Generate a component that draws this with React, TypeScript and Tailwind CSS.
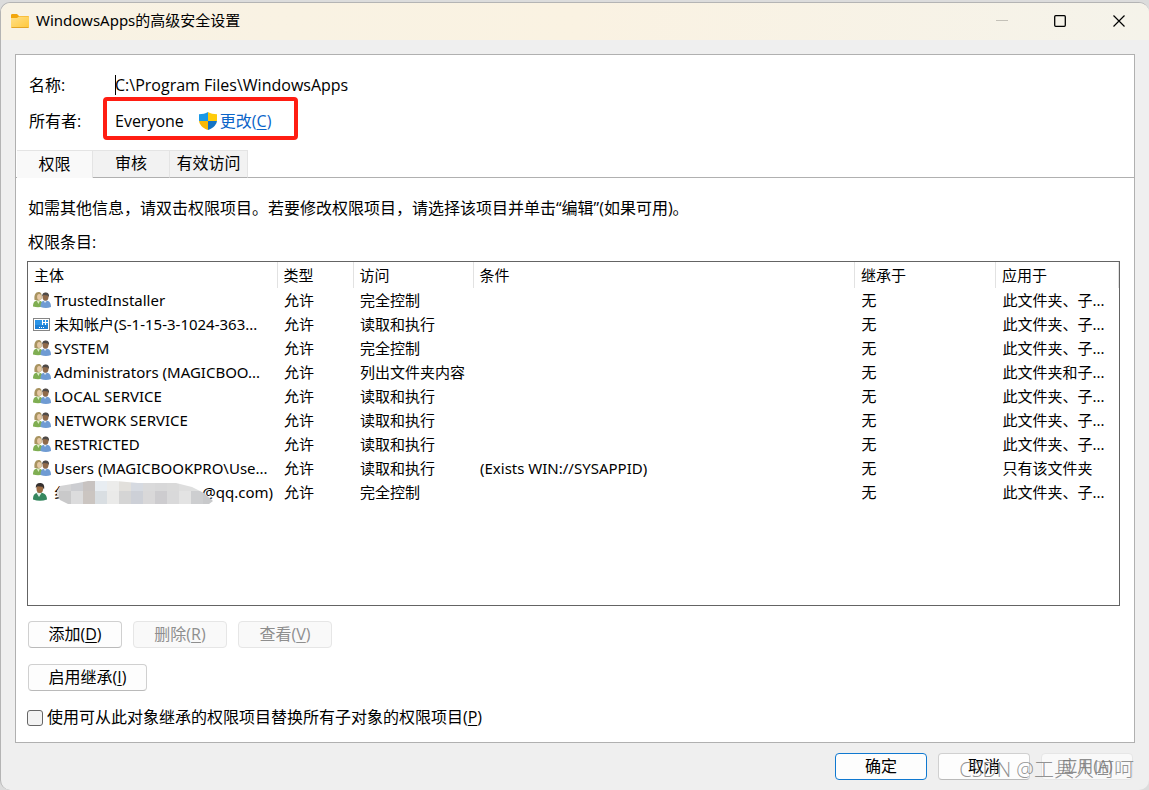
import React, { useState } from 'react';

type IconKind = 'group' | 'package' | 'user';

interface Entry {
  icon: IconKind;
  principal: string;
  access: string;
  condition?: string;
  appliesTo: string;
  redacted?: boolean;
}

const ENTRIES: Entry[] = [
  { icon: 'group', principal: 'TrustedInstaller', access: '完全控制', appliesTo: '此文件夹、子...' },
  { icon: 'package', principal: '未知帐户(S-1-15-3-1024-363...', access: '读取和执行', appliesTo: '此文件夹、子...' },
  { icon: 'group', principal: 'SYSTEM', access: '完全控制', appliesTo: '此文件夹、子...' },
  { icon: 'group', principal: 'Administrators (MAGICBOO...', access: '列出文件夹内容', appliesTo: '此文件夹和子...' },
  { icon: 'group', principal: 'LOCAL SERVICE', access: '读取和执行', appliesTo: '此文件夹、子...' },
  { icon: 'group', principal: 'NETWORK SERVICE', access: '读取和执行', appliesTo: '此文件夹、子...' },
  { icon: 'group', principal: 'RESTRICTED', access: '读取和执行', appliesTo: '此文件夹、子...' },
  {
    icon: 'group',
    principal: 'Users (MAGICBOOKPRO\\Use...',
    access: '读取和执行',
    condition: '(Exists WIN://SYSAPPID)',
    appliesTo: '只有该文件夹',
  },
  { icon: 'user', principal: '@qq.com)', access: '完全控制', appliesTo: '此文件夹、子...', redacted: true },
];

const FolderIcon = () => (
  <svg width="18" height="14" viewBox="0 0 18 14" aria-hidden="true">
    <defs>
      <linearGradient id="folder" x1="0" y1="0" x2="1" y2="1">
        <stop offset="0" stopColor="#ffe08a" />
        <stop offset="1" stopColor="#ffc83a" />
      </linearGradient>
    </defs>
    <path d="M0 1.2Q0 0 1.2 0H6l2 2h8.800q1.200 0 1.200 1.200V6H0Z" fill="#f2a60d" />
    <path d="M0 4h6l2-1.500h8.800q1.200 0 1.200 1.200v9.100q0 1.200-1.200 1.200H1.200Q0 14 0 12.800Z" fill="url(#folder)" />
    <path d="M.5 13.500h17" stroke="#e3a526" strokeWidth="1" />
  </svg>
);

const ShieldIcon = () => (
  <svg width="18" height="18" viewBox="0 0 18 18" aria-hidden="true">
    <defs>
      <clipPath id="shield">
        <path d="M9 0c2.500 1.700 5.500 2.200 9 2.200V8c0 4.500-3.500 8-9 10C3.500 16 0 12.500 0 8V2.200C3.500 2.200 6.500 1.700 9 0Z" />
      </clipPath>
    </defs>
    <g clipPath="url(#shield)">
      <path d="M0 0h9v9H0Z" fill="#1a98e6" />
      <path d="M9 0h9v9H9Z" fill="#ffcb0a" />
      <path d="M0 9h9v9H0Z" fill="#f9b806" />
      <path d="M9 9h9v9H9Z" fill="#1473c4" />
    </g>
  </svg>
);

const GroupIcon = () => (
  <svg width="18" height="16" viewBox="0 0 18 16" aria-hidden="true">
    <path d="M0 14.500c0-4 1.500-6 5-6s5 2 5 6Q5 16 0 14.500Z" fill="#7fae52" />
    <path d="M3.500 8.500 5.500 12l1.500-3.500Z" fill="#dcebc4" />
    <path d="M1.500 8C.8 3 2.500 0 5.500 0S9 2.500 8.500 7L6 8.500Z" fill="#a99460" />
    <ellipse cx="6.200" cy="5" rx="2.100" ry="3" fill="#e6c9a6" />
    <path d="M7.500 15c0-4.500 1.500-6.500 5-6.500s5.500 2 5.500 6.500q-5 1.800-10.500 0Z" fill="#6f9bd3" />
    <path d="M10.500 8.500 12 11l2-2.500Z" fill="#dce8f6" />
    <ellipse cx="12.500" cy="4.700" rx="3" ry="4" fill="#8f6a4a" />
    <path d="M9.200 4.500C9 1.800 10.300.5 12.700.5s3.800 1.500 3.200 4.700L14.800 3.500 10.500 3Z" fill="#4d4947" />
  </svg>
);

const PackageIcon = () => (
  <svg width="17" height="13" viewBox="0 0 17 13" shapeRendering="crispEdges" aria-hidden="true">
    <path d="M0 0h17v13H0Z" fill="#858585" />
    <path d="M1 1h15v11H1Z" fill="#fff" />
    <path d="M2 2h7v5H2ZM10 2h2v2h-2ZM13 2h2v2h-2ZM10 5h2v2h-2ZM13 5h2v2h-2Z" fill="#2a93e6" />
    <path d="M2 7h13v4H2Z" fill="#1c7fd4" />
    <path d="M6 9h1v1H6ZM8 9h1v1H8ZM10 9h1v1h-1Z" fill="#fff" />
  </svg>
);

const UserIcon = () => (
  <svg width="14" height="18" viewBox="0 0 14 18" aria-hidden="true">
    <path d="M0 16.500C0 11.500 2 9.500 6.500 9.500S14 12 14 16.500q-7 2.500-14 0Z" fill="#35875f" />
    <path d="m3.500 10 2.500 4 2.500-4Z" fill="#e3f1ea" />
    <ellipse cx="6.800" cy="5.500" rx="3.300" ry="4.500" fill="#9b6b43" />
    <path d="M2.800 5C2.500 1.700 4 0 7 0s5 2 4 6.500L9.500 3.800 4.500 3.200Z" fill="#35302f" />
  </svg>
);

const MOSAIC_TOP = ['#d3d3d4', '#cccdd1', '#c8c3c1', '#e8edf2', '#ececeb', '#e2e0dc', '#d6dae1', '#dadadb', '#d8d8d9', '#dadada', '#dedede', '#dedfdf', '#d6d6d8'];
const MOSAIC_BOTTOM = ['#c9c9ca', '#dcdcdd', '#cbc5c1', '#d9dee2', '#eaeae9', '#d5d5d5', '#cdd0d7', '#d9d8d9', '#cdcccf', '#d9d9da', '#e3e3e3', '#cdced0', '#c8c9cb'];

const Mosaic = () => (
  <svg className="absolute top-0 left-0" width="160" height="24" viewBox="0 0 160 24" aria-hidden="true">
    <defs>
      <clipPath id="smear">
        <path d="M2 13 6 6 24 3 34 1h28l22 2h38l16 4 12 6 9 8-4 3H14L6 20Z" />
      </clipPath>
    </defs>
    <g clipPath="url(#smear)">
      {MOSAIC_TOP.map((fill, i) => (
        <rect key={i} x={i * 12 + 5} y="0" width="12" height="11" fill={fill} />
      ))}
      {MOSAIC_BOTTOM.map((fill, i) => (
        <rect key={i} x={i * 12 + 5} y="11" width="12" height="13" fill={fill} />
      ))}
      <rect x="0" y="0" width="5" height="24" fill="#dcdcdc" />
    </g>
  </svg>
);

const EntryIcon: React.FC<{ kind: IconKind }> = ({ kind }) => {
  if (kind === 'package') return <PackageIcon />;
  if (kind === 'user') return <UserIcon />;
  return <GroupIcon />;
};

const AccessKey: React.FC<{ letter: string }> = ({ letter }) => (
  <>
    (<span className="underline underline-offset-2">{letter}</span>)
  </>
);

const BUTTON =
  'h-[27px] rounded border border-[#d0d0d0] border-b-[#bababa] bg-[#fdfdfd] pb-[2px] text-base leading-5 disabled:border-[#e6e6e6] disabled:bg-[#f9f9f9] disabled:text-[#8e8e8e]';

const TABS = [
  { label: '权限', width: 'w-[76px]' },
  { label: '审核', width: 'w-[77px]' },
  { label: '有效访问', width: 'w-[78px]' },
];

const TitleBar = () => (
  <header className="flex h-[37px] items-center bg-linear-to-r from-[#f8f2e4] via-[#faf2e2] to-[#f5f3ea] pb-[2px] pl-[10px]">
    <FolderIcon />
    <h1 className="ml-[7px] flex-1 pb-[2px] font-['Noto_Sans','Noto_Sans_CJK_SC',sans-serif] text-[15px] leading-5">
      WindowsApps的高级安全设置
    </h1>
    <button type="button" disabled aria-label="最小化" className="flex h-full w-[58px] items-center justify-center">
      <svg width="12" height="12" viewBox="0 0 12 12">
        <path d="M0 5.500h12" stroke="#c4c1b8" />
      </svg>
    </button>
    <button type="button" aria-label="最大化" className="flex h-full w-[58px] items-center justify-center">
      <svg width="12" height="12" viewBox="0 0 12 12">
        <rect x=".7" y=".7" width="10.600" height="10.600" rx="1" fill="none" stroke="#000" strokeWidth="1.300" />
      </svg>
    </button>
    <button type="button" aria-label="关闭" className="flex h-full w-[60px] items-center justify-center">
      <svg width="12" height="12" viewBox="0 0 12 12">
        <path d="m.5.5 11 11M11.500.5l-11 11" stroke="#000" strokeWidth="1.200" />
      </svg>
    </button>
  </header>
);

const EntryTable = () => (
  <div className="min-h-[344px] flex-1 border border-[#646464]">
    <table className="w-full table-fixed border-collapse text-left font-['Noto_Sans','Noto_Sans_CJK_SC',sans-serif] text-[15px] leading-6">
      <colgroup>
        <col className="w-[249px]" />
        <col className="w-[76px]" />
        <col className="w-[120px]" />
        <col />
        <col className="w-[141px]" />
        <col className="w-[123px]" />
      </colgroup>
      <thead>
        <tr className="h-[26px]">
          {['主体', '类型', '访问', '条件', '继承于', '应用于'].map(title => (
            <th key={title} scope="col" className="border-r border-[#e2e2e2] p-0 pl-[6px] font-normal">
              {title}
            </th>
          ))}
        </tr>
      </thead>
      <tbody>
        {ENTRIES.map(entry => (
          <tr key={entry.principal} className="h-6 whitespace-nowrap">
            <td className="p-0 pl-[5px]">
              <div className="flex h-6 items-center">
                <span className="flex w-[21px] shrink-0">
                  <EntryIcon kind={entry.icon} />
                </span>
                {entry.redacted ? (
                  <span className="relative flex flex-1 justify-between pr-1">
                    <span>纟</span>
                    <span>{entry.principal}</span>
                    <Mosaic />
                  </span>
                ) : (
                  <span>{entry.principal}</span>
                )}
              </div>
            </td>
            <td className="p-0 pl-[7px]">允许</td>
            <td className="p-0 pl-[7px]">{entry.access}</td>
            <td className="p-0 pl-[7px]">{entry.condition}</td>
            <td className="p-0 pl-[7px]">无</td>
            <td className="p-0 pl-[7px]">{entry.appliesTo}</td>
          </tr>
        ))}
      </tbody>
    </table>
  </div>
);

const App: React.FC = () => {
  const [activeTab, setActiveTab] = useState('权限');
  const [replaceChildren, setReplaceChildren] = useState(false);

  return (
    <div className="flex min-h-screen flex-col bg-[#dcdcdc] pt-[2px] font-['Open_Sans','Noto_Sans_CJK_SC',sans-serif] text-base leading-5 text-black">
      <div className="relative flex flex-1 flex-col overflow-hidden rounded-[10px] border-t border-l border-[#b4b4b4] bg-[#efefef]">
        <TitleBar />

        <main className="mx-[14px] mt-[14px] flex flex-1 flex-col border border-[#b0b0b0] bg-white">
          <div className="mt-5 flex h-5 items-center pl-[13px]">
            <label htmlFor="object-name" className="w-[86px]">名称:</label>
            <span aria-hidden="true" className="h-5 w-px bg-black" />
            <input id="object-name" readOnly value="C:\Program Files\WindowsApps" className="-ml-px h-5 w-80 outline-none" />
          </div>
          <div className="mt-[2px] flex h-[43px] items-center pl-[13px]">
            <span className="w-[74px] pt-1">所有者:</span>
            <div className="flex h-[43px] w-[195px] items-center rounded border-4 border-[#ff1d12] pt-1 pl-2">
              <span>Everyone</span>
              <a href="#change" className="ml-[15px] flex items-center gap-[3px] text-[#0a64c8]">
                <ShieldIcon />
                <span>更改<AccessKey letter="C" /></span>
              </a>
            </div>
          </div>

          <div role="tablist" className="mt-[10px] flex h-7 border-b border-[#b0b0b0] pl-px">
            {TABS.map(tab => (
              <button
                key={tab.label}
                type="button"
                role="tab"
                aria-selected={activeTab === tab.label}
                onClick={() => setActiveTab(tab.label)}
                className={`${tab.width} h-7 border-t border-r border-[#e4e4e4] pb-[2px] ${
                  activeTab === tab.label ? 'bg-[#f9f9f9]' : 'border-b border-b-[#b0b0b0] bg-[#f2f2f2]'
                }`}
              >
                {tab.label}
              </button>
            ))}
          </div>

          <section className="flex flex-1 flex-col pr-[14px] pb-[14px] pl-[11px]">
            <p className="mt-5 pl-px">如需其他信息，请双击权限项目。若要修改权限项目，请选择该项目并单击“编辑”(如果可用)。</p>
            <p className="mt-[14px] mb-[9px] pl-px">权限条目:</p>

            <EntryTable />

            <div className="mt-[15px] flex gap-[11px] pl-px">
              <button type="button" className={`${BUTTON} w-[94px]`}>添加<AccessKey letter="D" /></button>
              <button type="button" disabled className={`${BUTTON} w-[94px]`}>删除<AccessKey letter="R" /></button>
              <button type="button" disabled className={`${BUTTON} w-[94px]`}>查看<AccessKey letter="V" /></button>
            </div>
            <div className="mt-4 pl-px">
              <button type="button" className={`${BUTTON} w-[119px]`}>启用继承<AccessKey letter="I" /></button>
            </div>
            <label className="mt-[17px] flex h-5 items-center gap-1">
              <input
                type="checkbox"
                checked={replaceChildren}
                onChange={e => setReplaceChildren(e.target.checked)}
                className="size-4 appearance-none rounded-[3px] border border-[#666] bg-[#f3f3f3] checked:bg-[#0067c0]"
              />
              <span className="pb-[2px]">使用可从此对象继承的权限项目替换所有子对象的权限项目<AccessKey letter="P" /></span>
            </label>
          </section>
        </main>

        <footer className="flex h-[47px] items-start justify-end gap-[11px] pt-[10px] pr-4">
          <button type="button" className="h-[27px] w-[92px] rounded border border-[#0f78d0] bg-[#fdfdfd] pb-[2px]">确定</button>
          <button type="button" className={`${BUTTON} w-[92px]`}>取消</button>
          <button type="button" disabled className={`${BUTTON} w-[92px]`}>应用<AccessKey letter="A" /></button>
        </footer>

        <span className="pointer-events-none absolute right-[15px] bottom-2 text-xl leading-6 font-light text-[#777]/80">CSDN @工具人呵呵</span>
      </div>
    </div>
  );
};

export default App;
